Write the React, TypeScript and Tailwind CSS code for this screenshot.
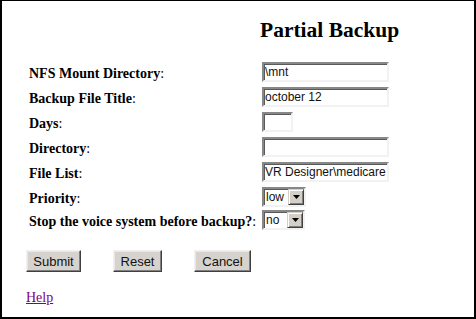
import React from "react";

const inset =
  "border-2 border-t-[#888888] border-l-[#888888] border-b-[#f2f2f2] border-r-[#f2f2f2] shadow-[inset_1px_1px_0_#5a5a5a]";

function TextBox({ value, width }: { value?: string; width: string }) {
  return (
    <input
      readOnly
      defaultValue={value}
      className={`${width} h-[20px] box-border bg-white p-0 pl-[1px] text-[12px] leading-none text-[#111] outline-none ${inset}`}
      style={{ fontFamily: '"Liberation Sans", Arial, sans-serif' }}
    />
  );
}

function Select({ value, width }: { value: string; width: string }) {
  return (
    <div
      className={`${width} h-[20px] box-border bg-white flex items-stretch ${inset}`}
    >
      <span
        className="flex-1 pl-[2px] text-[12px] leading-[16px] text-[#111]"
        style={{ fontFamily: '"Liberation Sans", Arial, sans-serif' }}
      >
        {value}
      </span>
      <span className="w-[16px] bg-[#d4d0c8] border border-t-[#d4d0c8] border-l-[#d4d0c8] border-b-[#404040] border-r-[#404040] shadow-[inset_1px_1px_0_#ffffff,inset_-1px_-1px_0_#808080] flex items-center justify-center">
        <svg width="7" height="4" viewBox="0 0 7 4">
          <path d="M0 0h7L3.5 4z" fill="#000" />
        </svg>
      </span>
    </div>
  );
}

function Button({ label, width }: { label: string; width: string }) {
  return (
    <button
      className={`${width} h-[22px] box-border bg-[#d6d3ce] border border-t-[#f0f0f0] border-l-[#f0f0f0] border-b-[#404040] border-r-[#404040] shadow-[inset_-1px_-1px_0_#808080,inset_1px_1px_0_#e8e8e8] text-[13px] leading-none text-[#111]`}
      style={{ fontFamily: '"Liberation Sans", Arial, sans-serif' }}
    >
      {label}
    </button>
  );
}

function Row({
  label,
  children,
  height = "h-[25px]",
}: {
  label: string;
  children: React.ReactNode;
  height?: string;
}) {
  return (
    <div className={`flex items-center ${height}`}>
      <div className="w-[233px] shrink-0 whitespace-nowrap pt-[3px] text-[14px] text-black">
        <span className="font-bold">{label}</span>:
      </div>
      {children}
    </div>
  );
}

export default function App() {
  return (
    <div
      className="w-[476px] h-[319px] box-border bg-white border-solid border-black border-t border-l-2 border-r-2 border-b-2 overflow-hidden"
      style={{ fontFamily: '"Liberation Serif", "Times New Roman", serif' }}
    >
      {/* Title */}
      <h1 className="pt-[18px] pl-[258px] text-[21.5px] leading-[23px] font-bold text-black">
        Partial Backup
      </h1>

      {/* Form rows */}
      <div className="mt-[17px] pl-[27px]">
        <Row label="NFS Mount Directory">
          <TextBox value="\mnt" width="w-[127px]" />
        </Row>
        <Row label="Backup File Title">
          <TextBox value="october 12" width="w-[127px]" />
        </Row>
        <Row label="Days">
          <TextBox width="w-[31px]" />
        </Row>
        <Row label="Directory">
          <TextBox width="w-[127px]" />
        </Row>
        <Row label="File List">
          <TextBox value="VR Designer\medicare" width="w-[127px]" />
        </Row>
        <Row label="Priority">
          <Select value="low" width="w-[44px]" />
        </Row>
        <Row label="Stop the voice system before backup?" height="h-[22px]">
          <Select value="no" width="w-[43px]" />
        </Row>
      </div>

      {/* Buttons */}
      <div className="mt-[19px] pl-[24px] flex gap-8">
        <Button label="Submit" width="w-[55px]" />
        <Button label="Reset" width="w-[49px]" />
        <Button label="Cancel" width="w-[57px]" />
      </div>

      <div className="mt-[18px] pl-[24px] text-[14px] leading-[16px]">
        <a href="#" className="text-[#800080] underline">
          Help
        </a>
      </div>
    </div>
  );
}
